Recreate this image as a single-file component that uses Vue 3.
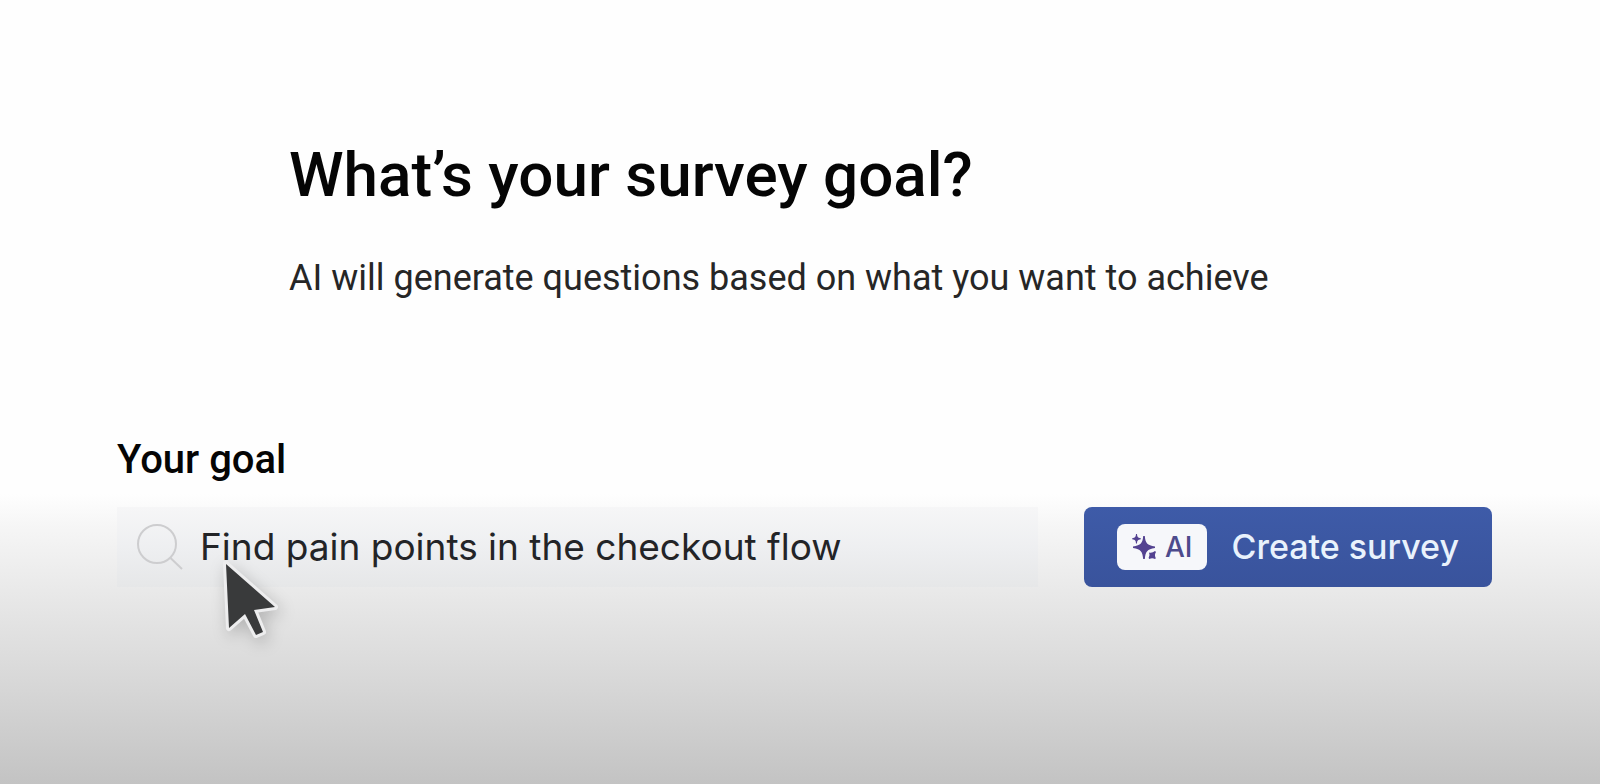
<script setup>
import { ref } from 'vue'

const goal = ref('Find pain points in the checkout flow')
</script>

<template>
  <main class="page">
    <header class="intro">
      <h1 class="title">What’s your survey goal?</h1>
      <p class="subtitle">AI will generate questions based on what you want to achieve</p>
    </header>

    <form class="goal-form" @submit.prevent>
      <label class="goal-label" for="goal">Your goal</label>
      <div class="goal-row">
        <div class="field">
          <svg class="search-icon" viewBox="0 0 48 48" aria-hidden="true">
            <circle cx="21" cy="21" r="19" />
            <path d="M34.5 35 L46 46" />
          </svg>
          <input id="goal" v-model="goal" class="goal-input" type="text" />
        </div>
        <button class="create" type="submit">
          <span class="badge">
            <svg class="sparkle" viewBox="0 0 24 26" aria-hidden="true">
              <path d="M11.2 2 H12.8 C13.4 9 15 11.2 23 12.6 V14 C15 15.2 13.6 17.5 12.8 25 H11.2 C10.4 17.5 9 15.2 1 14 V12.6 C9 11.2 10.6 9 11.2 2 Z" />
              <path d="M4 0 H5 C5.2 3 5.8 3.8 8.8 4.3 V5.3 C5.8 5.8 5.2 6.6 5 9.4 H4 C3.8 6.6 3.2 5.8 0.2 5.3 V4.3 C3.2 3.8 3.8 3 4 0 Z" />
              <path d="M17 18.4 Q20 19.4 23 17 L24 18 Q22 21 23.8 24.2 L23 25 Q20 23.4 17.4 25 L16.6 24 Q18.4 21.4 17 18.4 Z" />
            </svg>
            AI
          </span>
          <span>Create survey</span>
        </button>
      </div>
    </form>

    <svg class="cursor" viewBox="0 0 64 88" aria-hidden="true">
      <path d="M8 7 L57 50 L36 53 L45 75 L38 78 L27 57 L11 71 Z" />
    </svg>
  </main>
</template>

<style>
html,
body {
  margin: 0;
}
</style>

<style scoped>
.page {
  position: relative;
  box-sizing: border-box;
  min-height: 100vh;
  padding: 139px 108px 40px 117px;
  background: linear-gradient(
    180deg,
    #fefefe 0,
    #fefefe 63%,
    #f6f6f6 67%,
    #e8e8e8 76%,
    #d6d6d6 88%,
    #c3c3c3 100%
  );
  color: #050505;
  font-family: Roboto, "Liberation Sans", sans-serif;
}

.intro {
  margin-left: 172px;
}

.title {
  margin: 0;
  font-size: 62px;
  font-weight: 500;
  line-height: 72px;
}

.subtitle {
  margin: 46px 0 0;
  color: #262626;
  font-size: 36px;
  line-height: 42px;
}

.goal-form {
  margin-top: 137px;
}

.goal-label {
  display: block;
  font-size: 40px;
  font-weight: 500;
  line-height: 48px;
}

.goal-row {
  display: flex;
  gap: 46px;
  margin-top: 23px;
}

.field {
  display: flex;
  flex: 1;
  align-items: center;
  gap: 16px;
  box-sizing: border-box;
  min-width: 0;
  height: 80px;
  padding-left: 19px;
  background: linear-gradient(180deg, #f6f6f7, #eeeff1 50%, #e6e7e8);
}

.search-icon {
  flex: none;
  width: 48px;
  height: 48px;
  fill: none;
  stroke: #cdcdcf;
  stroke-width: 2;
}

.goal-input {
  flex: 1;
  min-width: 0;
  padding: 0;
  border: 0;
  outline: 0;
  background: transparent;
  color: #232427;
  font-family: Inter, "Liberation Sans", sans-serif;
  font-size: 37px;
  line-height: 48px;
}

.create {
  display: flex;
  align-items: center;
  gap: 24px;
  box-sizing: border-box;
  height: 80px;
  padding: 0 33px;
  border: 0;
  border-radius: 8px;
  background: linear-gradient(180deg, #3e5ba8, #39539c);
  color: #e9f2fc;
  font-family: Inter, "Liberation Sans", sans-serif;
  font-size: 34px;
  font-weight: 500;
  line-height: 48px;
  white-space: nowrap;
}

.badge {
  display: flex;
  align-items: center;
  gap: 9px;
  height: 46px;
  padding: 0 15px;
  border-radius: 8px;
  background: #f6f7fa;
  color: #4d4b8c;
  font-size: 28px;
}

.sparkle {
  width: 24px;
  height: 26px;
  fill: #534290;
}

.cursor {
  position: absolute;
  top: 557px;
  left: 218px;
  width: 64px;
  height: 88px;
  overflow: visible;
  fill: #393a3b;
  stroke: #ededee;
  stroke-width: 6;
  stroke-linejoin: round;
  paint-order: stroke;
  filter: drop-shadow(3px 5px 8px rgba(0, 0, 0, 0.2));
  pointer-events: none;
}
</style>
